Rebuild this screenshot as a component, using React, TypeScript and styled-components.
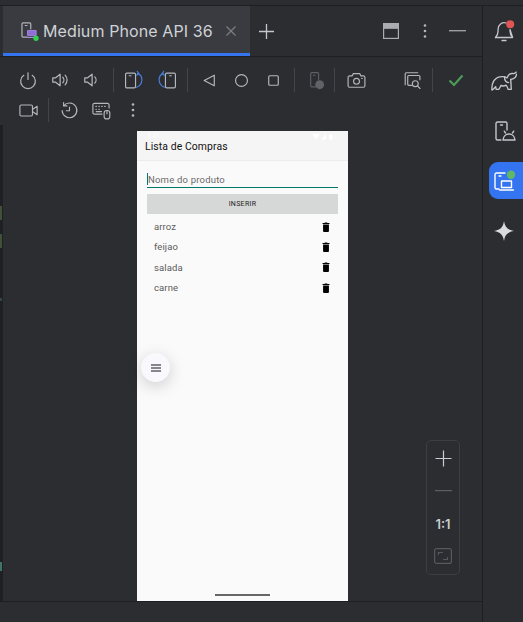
import React from "react";
import styled, { createGlobalStyle } from "styled-components";

const Global = createGlobalStyle`
  html, body { margin: 0; padding: 0; background: #2b2d30; }
  #root { width: 523px; height: 622px; overflow: hidden; }
  * { box-sizing: border-box; }
`;

const Page = styled.div`
  width: 523px;
  height: 622px;
  display: flex;
  flex-direction: column;
  background: #2b2d30;
  font-family: Inter, "Noto Sans", sans-serif;
`;

const TopStrip = styled.div`
  height: 6px;
  flex: none;
  border-bottom: 1px solid #1e1f22;
`;

const Body = styled.div`
  flex: 1;
  display: flex;
  min-height: 0;
`;

const Main = styled.div`
  flex: 1;
  min-width: 0;
  display: flex;
  flex-direction: column;
`;

const TabBar = styled.div`
  height: 51px;
  flex: none;
  display: flex;
  align-items: stretch;
  border-bottom: 1px solid #1e1f22;
  padding-left: 3px;
  padding-right: 9px;
`;

const Tab = styled.div`
  width: 247px;
  display: flex;
  align-items: center;
  gap: 3px;
  padding: 3px 14px 0 15px;
  background: #393b40;
  border-bottom: 3px solid #3574f0;
  color: #cfd2d6;
  font-size: 16px;
  white-space: nowrap;
`;

const TabTitle = styled.span`
  flex: 1;
  letter-spacing: 0.1px;
`;

const TabActions = styled.div`
  flex: 1;
  display: flex;
  align-items: center;
  color: #c4c7cc;
`;

const IconSlot = styled.span<{ $w?: number; $ml?: number }>`
  width: ${(p) => p.$w ?? 32}px;
  height: 30px;
  margin-left: ${(p) => p.$ml ?? 0}px;
  flex: none;
  display: flex;
  align-items: center;
  justify-content: center;
  color: #b4b7bb;
`;

const Toolbar = styled.div`
  height: 68px;
  flex: none;
  padding: 8px 0 0 12px;
`;

const ToolRow = styled.div`
  height: 30px;
  display: flex;
  align-items: center;
`;

const Sep = styled.span<{ $l?: number; $r?: number }>`
  width: 1px;
  height: 24px;
  flex: none;
  margin-left: ${(p) => p.$l ?? 5}px;
  margin-right: ${(p) => p.$r ?? 5}px;
  background: #43454a;
`;

const CanvasRow = styled.div`
  flex: 1;
  min-height: 0;
  display: flex;
`;

const LogStrip = styled.div`
  width: 3px;
  flex: none;
  background: #1f2023;
  display: flex;
  flex-direction: column;
  padding-top: 81px;
`;

const LogMark = styled.span<{ $h: number; $mb: number; $c: string }>`
  display: block;
  width: 2px;
  height: ${(p) => p.$h}px;
  margin-bottom: ${(p) => p.$mb}px;
  background: ${(p) => p.$c};
`;

const Canvas = styled.div`
  position: relative;
  flex: 1;
  display: flex;
  justify-content: center;
  padding-top: 6px;
`;

const Phone = styled.div`
  position: relative;
  width: 211px;
  height: 470px;
  background: #fafafa;
  display: flex;
  flex-direction: column;
  font-family: Roboto, "Noto Sans", sans-serif;
`;

const AppBar = styled.div`
  height: 30px;
  flex: none;
  display: flex;
  flex-direction: column;
  justify-content: space-between;
  padding: 2px 8px 9px;
  background: #f5f5f5;
  border-bottom: 1px solid #ececec;
  color: #111;
  font-size: 10.4px;
  letter-spacing: 0.1px;
`;

const StatusRow = styled.div`
  height: 7px;
  display: flex;
  align-items: center;
  justify-content: space-between;
  padding: 0 6px 0 2px;
  color: #fff;
  font-size: 6.5px;
  line-height: 7px;
`;

const Form = styled.div`
  display: flex;
  flex-direction: column;
  padding: 12px 10px 0;
`;

const Field = styled.div`
  height: 15px;
  padding-bottom: 2px;
  display: flex;
  align-items: center;
  border-bottom: 1px solid #00796b;
  color: #6a6a6a;
  font-size: 9.5px;
  letter-spacing: 0.2px;
`;

const Caret = styled.span`
  width: 1px;
  height: 12px;
  background: #00796b;
`;

const InsertButton = styled.div`
  height: 20px;
  margin-top: 6px;
  display: flex;
  align-items: center;
  justify-content: center;
  background: #d6d7d7;
  color: #1c1c1c;
  font-size: 7px;
  letter-spacing: 0.3px;
`;

const ItemList = styled.div`
  display: flex;
  flex-direction: column;
  padding: 2.4px 18px 0 17px;
`;

const Item = styled.div`
  height: 20.4px;
  display: flex;
  align-items: center;
  justify-content: space-between;
  color: #5a5a5a;
  font-size: 9.5px;
  letter-spacing: 0.1px;
`;

const HomeBar = styled.div`
  position: absolute;
  left: 78px;
  bottom: 5px;
  width: 55px;
  height: 2px;
  background: #666;
`;

const Fab = styled.div`
  position: absolute;
  left: 4px;
  top: 222px;
  width: 29px;
  height: 29px;
  border-radius: 50%;
  background: #f8f8fd;
  box-shadow: 0 4px 16px rgba(0, 0, 0, 0.18);
  display: flex;
  align-items: center;
  justify-content: center;
`;

const ZoomPanel = styled.div`
  position: absolute;
  right: 22px;
  bottom: 26px;
  width: 34px;
  height: 135px;
  border: 1px solid #3c3e42;
  border-radius: 5px;
  display: flex;
  flex-direction: column;
  align-items: center;
`;

const ZoomSlot = styled.div<{ $h: number }>`
  height: ${(p) => p.$h}px;
  flex: none;
  display: flex;
  align-items: center;
  justify-content: center;
`;

const ZoomLabel = styled.span`
  font-size: 13px;
  font-weight: 600;
  color: #c9ccd0;
`;

const BottomStrip = styled.div`
  height: 21px;
  flex: none;
  border-top: 1px solid #1e1f22;
`;

const Sidebar = styled.div`
  width: 41px;
  flex: none;
  border-left: 1px solid #1e1f22;
  display: flex;
  flex-direction: column;
  align-items: flex-end;
  padding-top: 6px;
`;

const SideButton = styled.div<{ $active?: boolean }>`
  width: 34px;
  height: 37px;
  margin-bottom: 13px;
  display: flex;
  align-items: center;
  justify-content: center;
  color: #c4c7cc;
  padding-right: 4px;
  border-radius: 9px 0 0 9px;
  background: ${(p) => (p.$active ? "#3574f0" : "transparent")};
`;

const Ico = ({ size = 20, vb = 18, children }: { size?: number; vb?: number; children: React.ReactNode }) => (
  <svg
    width={size}
    height={size}
    viewBox={`0 0 ${vb} ${vb}`}
    fill="none"
    stroke="currentColor"
    strokeWidth={1.1}
    strokeLinecap="round"
    strokeLinejoin="round"
  >
    {children}
  </svg>
);

const BLUE = "#4a7fe0";

const PhoneTabIcon = () => (
  <Ico size={22} vb={20}>
    <path d="M8 15.500H4.600a1 1 0 0 1-1-1V3.600a1 1 0 0 1 1-1h6a1 1 0 0 1 1 1V8" stroke="#b0b3b8" />
    <path d="M6.600 5h1.600" stroke="#b0b3b8" />
    <rect x="9" y="9.500" width="7.500" height="4.500" fill="#8f6fd6" stroke="#a78be0" strokeWidth={0.8} />
    <path d="M8 15.800h9" stroke="#a78be0" />
    <circle cx="16.400" cy="16.600" r="2.400" fill="#2fd14a" stroke="none" />
  </Ico>
);

const Power = () => (
  <Ico>
    <path d="M9 2.500v6" />
    <path d="M5.200 4.800a6.600 6.600 0 1 0 7.600 0" />
  </Ico>
);

const Speaker = () => <path d="M2.500 7v4h2.600l4 3.200V3.800L5.100 7z" />;

const VolUp = () => (
  <Ico>
    <Speaker />
    <path d="M11.500 6.500a3.600 3.600 0 0 1 0 5" />
    <path d="M13.600 4.600a6.400 6.400 0 0 1 0 8.800" />
  </Ico>
);

const VolDown = () => (
  <Ico>
    <Speaker />
    <path d="M11.500 6.200a4 4 0 0 1 0 5.600" />
  </Ico>
);

const RotateRight = () => (
  <Ico size={21} vb={20}>
    <rect x="1.500" y="3" width="9.500" height="14" rx="1.200" />
    <path d="M5 5.500h1.600" />
    <path d="M13 3.200c2.800 1.200 4.200 3.900 4 6.500-.2 3-2.200 5.600-5 6.800" stroke={BLUE} />
    <path d="M12.600 1.200 14.200 3.400 12 5" stroke={BLUE} />
  </Ico>
);

const RotateLeft = () => (
  <Ico size={21} vb={20}>
    <rect x="9" y="3" width="9.500" height="14" rx="1.200" />
    <path d="M13 5.500h1.600" />
    <path d="M7 3.200C4.200 4.400 2.800 7.100 3 9.700c.2 3 2.200 5.600 5 6.800" stroke={BLUE} />
    <path d="M7.400 1.200 5.800 3.400 8 5" stroke={BLUE} />
  </Ico>
);

const Back = () => (
  <Ico size={17} vb={16}>
    <path d="M12.500 3v10L3 8z" />
  </Ico>
);

const Home = () => (
  <Ico size={17} vb={16}>
    <circle cx="8" cy="8" r="5.600" />
  </Ico>
);

const Overview = () => (
  <Ico size={17} vb={16}>
    <rect x="3.500" y="3.500" width="9" height="9" rx="1" />
  </Ico>
);

const PhoneGear = () => (
  <Ico size={19}>
    <path d="M8 15H4.500a1 1 0 0 1-1-1V2.500a1 1 0 0 1 1-1h5.500a1 1 0 0 1 1 1V8" stroke="#5c5f64" />
    <path d="M6 4h1.500" stroke="#5c5f64" />
    <circle cx="12" cy="13" r="4.200" fill="#5f6266" stroke="none" />
  </Ico>
);

const Camera = () => (
  <Ico size={21} vb={20}>
    <path d="M2 7a1.400 1.400 0 0 1 1.400-1.400h2.400L7 3.400h6l1.200 2.200h2.400A1.400 1.400 0 0 1 18 7v8a1.400 1.400 0 0 1-1.400 1.400H3.400A1.400 1.400 0 0 1 2 15z" />
    <circle cx="10" cy="10.800" r="2.800" />
    <path d="M15 8h.4" />
  </Ico>
);

const Snapshots = () => (
  <Ico size={21} vb={20}>
    <path d="M4 14V3.600a1 1 0 0 1 1-1h11" />
    <path d="M10 14.600H7.400a1 1 0 0 1-1-1V6.200a1 1 0 0 1 1-1H17a1 1 0 0 1 1 1v3" />
    <circle cx="13.600" cy="13" r="2.800" />
    <path d="m15.700 15.100 2.400 2.500" />
  </Ico>
);

const Check = () => (
  <svg width="18" height="18" viewBox="0 0 18 18" fill="none" stroke="#4e9a5b" strokeWidth={2.2}>
    <path d="M2.500 9.500 7 14l8.500-9.500" />
  </svg>
);

const Video = () => (
  <Ico size={21} vb={20}>
    <rect x="1.800" y="4.800" width="12" height="10.400" rx="1.400" />
    <path d="m13.800 9 4.400-3v8l-4.400-3" />
  </Ico>
);

const Restore = () => (
  <Ico size={21} vb={20}>
    <path d="M4.600 5.400A7 7 0 1 1 3 10" />
    <path d="M4.400 2.400v3.200h3.200" />
    <path d="M10 6.800v3.400H7" />
  </Ico>
);

const KeyboardMouse = () => (
  <Ico size={21} vb={20}>
    <path d="M10.500 13.500H3.200A1.400 1.400 0 0 1 1.800 12V4.600a1.400 1.400 0 0 1 1.400-1.400h12.600a1.400 1.400 0 0 1 1.400 1.400v3" />
    <path d="M4.600 6h.6M7.400 6H8M10.200 6h.6M13 6h.6M4.600 8.800h.6M7.400 8.800H8M5 11h5" />
    <rect x="12.500" y="10" width="5.400" height="8" rx="2.400" />
    <path d="M15.200 10v3" />
  </Ico>
);

const Dots = () => (
  <svg width="16" height="16" viewBox="0 0 16 16" fill="currentColor">
    <circle cx="8" cy="2.500" r="1.300" />
    <circle cx="8" cy="8" r="1.300" />
    <circle cx="8" cy="13.500" r="1.300" />
  </svg>
);

const Trash = () => (
  <svg width="8" height="10" viewBox="0 0 9 11" fill="#000">
    <path d="M0.600 1h2.200l.5-.6h2.400l.5.6h2.200v1H.6z" />
    <path d="M1.200 2.600h6.600V10a1 1 0 0 1-1 1H2.200a1 1 0 0 1-1-1z" />
  </svg>
);

const Menu = () => (
  <svg width="10" height="8" viewBox="0 0 10 8" stroke="#14141c" strokeWidth={1.2}>
    <path d="M0 1h10M0 4h10M0 7h10" />
  </svg>
);

const StatusIcons = () => (
  <svg width="22" height="6" viewBox="0 0 22 6" fill="#fff">
    <path d="M0 0h8L4 5.500z" />
    <path d="M9 5.500 14 0v5.500z" />
    <rect x="17" y="0.500" width="3.400" height="5" />
  </svg>
);

const Bell = () => (
  <svg width="24" height="24" viewBox="0 0 24 24" fill="none" stroke="currentColor" strokeWidth={1.3} strokeLinejoin="round" strokeLinecap="round">
    <path d="M3.500 18.500c1.800-1.800 2.600-3.600 2.600-6.400V10a6.200 6.200 0 0 1 8-6" />
    <path d="M18 10.500v1.600c0 2.800.8 4.600 2.600 6.400z" />
    <path d="M3.500 18.500h16" />
    <path d="M10 21.500h4" />
    <circle cx="18.200" cy="5.200" r="4" fill="#e05555" stroke="none" />
  </svg>
);

const Elephant = () => (
  <svg width="26" height="20" viewBox="0 0 25 19" fill="none" stroke="currentColor" strokeWidth={1.3} strokeLinejoin="round" strokeLinecap="round">
    <path d="M1 18C.3 12 3 6.500 8.500 5.500c2.500-.5 5-.2 7 1 1-3 3.500-4.500 5.500-4.200 1.500.2 2.500-.3 3.200-1.300" />
    <path d="M24.500 3c0 2.500-2.500 5-5.500 5" />
    <path d="M19 8l.5 9.500h-3c-.5-2-1-3-2-4-2 1-3.500 1-5 .3-.5 1.200-1 2.700-2 3.700H5L4.500 15c-1 1-2 2.500-3.500 3" />
    <path d="M13 5.500c0 3.500 1.500 5.500 4 5.500" />
  </svg>
);

const PhoneAndroid = () => (
  <svg width="24" height="24" viewBox="0 0 24 24" fill="none" stroke="currentColor" strokeWidth={1.4} strokeLinejoin="round" strokeLinecap="round">
    <path d="M9 21H5.500A1.500 1.500 0 0 1 4 19.500V4.500A1.500 1.500 0 0 1 5.500 3h8A1.500 1.500 0 0 1 15 4.500V11" />
    <path d="M8.500 6h2" />
    <path d="M11 21c.3-3.600 2.800-6 6-6s5.700 2.400 6 6z" />
    <path d="m13.500 14-1.200-1.800M20.500 14l1.200-1.800" />
  </svg>
);

const RunningDevices = () => (
  <svg width="24" height="24" viewBox="0 0 24 24" fill="none" stroke="#fff" strokeWidth={1.4} strokeLinejoin="round" strokeLinecap="round">
    <path d="M7 20H4.500A1.500 1.500 0 0 1 3 18.500V5.500A1.500 1.500 0 0 1 4.500 4H13" />
    <path d="M7 7h2" />
    <rect x="9.500" y="12" width="10" height="6.500" />
    <path d="M7.500 21h14" />
    <circle cx="19" cy="5.800" r="4.200" fill="#5fb865" stroke="none" />
  </svg>
);

const Sparkle = () => (
  <svg width="22" height="22" viewBox="0 0 22 22" fill="#d9dbde">
    <path d="M11 1c.8 6 3.500 9 10 10-6.500 1-9.200 4-10 10-.8-6-3.500-9-10-10 6.500-1 9.200-4 10-10z" />
  </svg>
);

const items = ["arroz", "feijao", "salada", "carne"];

export default function App() {
  return (
    <Page>
      <Global />
      <TopStrip />
      <Body>
        <Main>
          <TabBar>
            <Tab>
              <PhoneTabIcon />
              <TabTitle>Medium Phone API 36</TabTitle>
              <svg width="10" height="10" viewBox="0 0 10 10" stroke="#7d8085" strokeWidth={1.1}>
                <path d="M0.500 0.500 9.500 9.500M9.500 0.500 0.500 9.500" />
              </svg>
            </Tab>
            <TabActions>
              <IconSlot $w={33}>
                <svg width="17" height="17" viewBox="0 0 17 17" stroke="#c4c7cc" strokeWidth={1.3} fill="none">
                  <path d="M8.500 1v15M1 8.500h15" />
                </svg>
              </IconSlot>
              <IconSlot $w={16} $ml={100}>
                <svg width="16" height="16" viewBox="0 0 16 16" fill="none" stroke="#a9acb1" strokeWidth={1.2}>
                  <rect x="0.600" y="0.600" width="14.800" height="14.800" />
                  <rect x="0.600" y="0.600" width="14.800" height="4.600" fill="#a9acb1" />
                </svg>
              </IconSlot>
              <IconSlot $w={20} $ml={16}>
                <Dots />
              </IconSlot>
              <IconSlot $w={18} $ml={13}>
                <svg width="17" height="2" viewBox="0 0 17 2">
                  <rect width="17" height="1.400" fill="#9a9da2" />
                </svg>
              </IconSlot>
            </TabActions>
          </TabBar>

          <Toolbar>
            <ToolRow>
              <IconSlot><Power /></IconSlot>
              <IconSlot><VolUp /></IconSlot>
              <IconSlot><VolDown /></IconSlot>
              <Sep $r={4} />
              <IconSlot><RotateRight /></IconSlot>
              <IconSlot><RotateLeft /></IconSlot>
              <Sep />
              <IconSlot><Back /></IconSlot>
              <IconSlot><Home /></IconSlot>
              <IconSlot><Overview /></IconSlot>
              <Sep $r={5} />
              <IconSlot><PhoneGear /></IconSlot>
              <Sep $l={2} $r={5} />
              <IconSlot><Camera /></IconSlot>
              <IconSlot $ml={23}><Snapshots /></IconSlot>
              <Sep $r={7} />
              <IconSlot><Check /></IconSlot>
            </ToolRow>
            <ToolRow>
              <IconSlot><Video /></IconSlot>
              <Sep $l={4} $r={4} />
              <IconSlot><Restore /></IconSlot>
              <IconSlot><KeyboardMouse /></IconSlot>
              <IconSlot><Dots /></IconSlot>
            </ToolRow>
          </Toolbar>

          <CanvasRow>
            <LogStrip>
              <LogMark $h={14} $mb={14} $c="#3f5238" />
              <LogMark $h={14} $mb={50} $c="#3f5238" />
              <LogMark $h={3} $mb={261} $c="#35483c" />
              <LogMark $h={9} $mb={0} $c="#3f7567" />
            </LogStrip>
            <Canvas>
              <Phone>
                <AppBar>
                  <StatusRow>
                    <span>5:41</span>
                    <StatusIcons />
                  </StatusRow>
                  Lista de Compras
                </AppBar>
                <Form>
                  <Field>
                    <Caret />
                    Nome do produto
                  </Field>
                  <InsertButton>INSERIR</InsertButton>
                </Form>
                <ItemList>
                  {items.map((item) => (
                    <Item key={item}>
                      {item}
                      <Trash />
                    </Item>
                  ))}
                </ItemList>
                <Fab><Menu /></Fab>
                <HomeBar />
              </Phone>
              <ZoomPanel>
                <ZoomSlot $h={35}>
                  <svg width="17" height="17" viewBox="0 0 17 17" stroke="#c9ccd0" strokeWidth={1.2}>
                    <path d="M8.500 0.500v16M0.500 8.500h16" />
                  </svg>
                </ZoomSlot>
                <ZoomSlot $h={29}>
                  <svg width="17" height="2" viewBox="0 0 17 2">
                    <rect width="17" height="1.200" fill="#5c5f64" />
                  </svg>
                </ZoomSlot>
                <ZoomSlot $h={37}>
                  <ZoomLabel>1:1</ZoomLabel>
                </ZoomSlot>
                <ZoomSlot $h={27}>
                  <svg width="18" height="16" viewBox="0 0 18 16" fill="none" stroke="#55585d" strokeWidth={1.2}>
                    <rect x="0.600" y="0.600" width="16.800" height="14.800" rx="2" />
                    <path d="M4.500 7V4.500H9M13.500 9v2.500H9" />
                  </svg>
                </ZoomSlot>
              </ZoomPanel>
            </Canvas>
          </CanvasRow>
          <BottomStrip />
        </Main>
        <Sidebar>
          <SideButton><Bell /></SideButton>
          <SideButton><Elephant /></SideButton>
          <SideButton><PhoneAndroid /></SideButton>
          <SideButton $active><RunningDevices /></SideButton>
          <SideButton><Sparkle /></SideButton>
        </Sidebar>
      </Body>
    </Page>
  );
}
